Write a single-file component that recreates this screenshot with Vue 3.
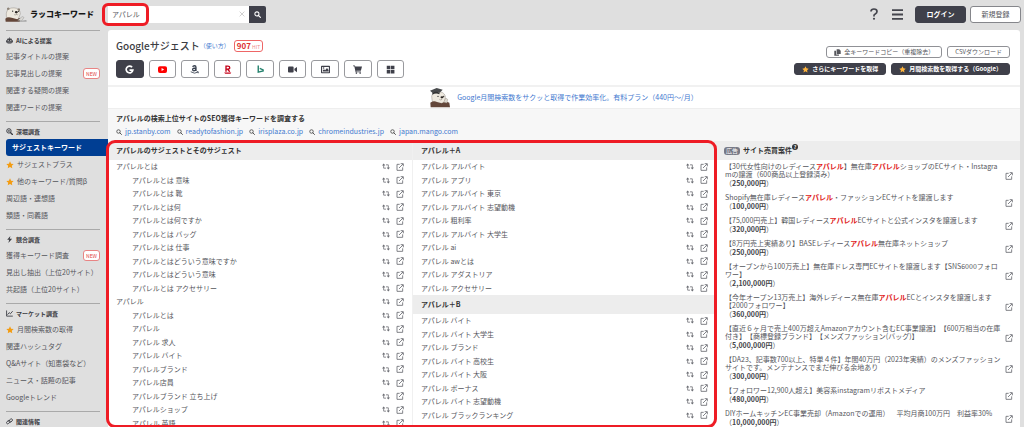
<script setup>
import { ref } from 'vue'

const query = ref('アパレル')

const sections = [
  {
    title: 'AIによる提案',
    icon: 'robot',
    items: [
      { label: '記事タイトルの提案' },
      { label: '記事見出しの提案', isNew: true },
      { label: '関連する疑問の提案' },
      { label: '関連ワードの提案' },
    ],
  },
  {
    title: '深堀調査',
    icon: 'zoom',
    items: [
      { label: 'サジェストキーワード', active: true },
      { label: 'サジェストプラス', star: true },
      { label: '他のキーワード/質問β', star: true },
      { label: '周辺語・連想語' },
      { label: '類語・同義語' },
    ],
  },
  {
    title: '競合調査',
    icon: 'bolt',
    items: [
      { label: '獲得キーワード調査', isNew: true },
      { label: '見出し抽出（上位20サイト）' },
      { label: '共起語（上位20サイト）' },
    ],
  },
  {
    title: 'マーケット調査',
    icon: 'chart',
    items: [
      { label: '月間検索数の取得', star: true },
      { label: '関連ハッシュタグ' },
      { label: 'Q&Aサイト（知恵袋など）' },
      { label: 'ニュース・話題の記事' },
      { label: 'Googleトレンド' },
    ],
  },
  { title: '関連情報', icon: 'link', items: [] },
]

const engines = ['google', 'youtube', 'amazon', 'rakuten', 'bing', 'video', 'image', 'cart', 'windows']
const engineNames = ['Google', 'YouTube', 'Amazon', '楽天', 'Bing', '動画', '画像', 'ショッピング', 'Microsoft']

const domains = ['jp.stanby.com', 'readytofashion.jp', 'irisplaza.co.jp', 'chromeindustries.jp', 'japan.mango.com']

const columns = [
  [
    {
      title: 'アパレルのサジェストとそのサジェスト',
      rows: [
        ['アパレルとは', 0],
        ['アパレルとは 意味', 1],
        ['アパレルとは 靴', 1],
        ['アパレルとは何', 1],
        ['アパレルとは何ですか', 1],
        ['アパレルとは バッグ', 1],
        ['アパレルとは 仕事', 1],
        ['アパレルとはどういう意味ですか', 1],
        ['アパレルとはどういう意味', 1],
        ['アパレルとは アクセサリー', 1],
        ['アパレル', 0],
        ['アパレルとは', 1],
        ['アパレル', 1],
        ['アパレル 求人', 1],
        ['アパレル バイト', 1],
        ['アパレルブランド', 1],
        ['アパレル店員', 1],
        ['アパレルブランド 立ち上げ', 1],
        ['アパレルショップ', 1],
        ['アパレル 英語', 1],
      ],
    },
  ],
  [
    {
      title: 'アパレル＋A',
      rows: [
        ['アパレル アルバイト', 0],
        ['アパレル アプリ', 0],
        ['アパレル アルバイト 東京', 0],
        ['アパレル アルバイト 志望動機', 0],
        ['アパレル 粗利率', 0],
        ['アパレル アルバイト 大学生', 0],
        ['アパレル ai', 0],
        ['アパレル awとは', 0],
        ['アパレル アダストリア', 0],
        ['アパレル アクセサリー', 0],
      ],
    },
    {
      title: 'アパレル＋B',
      rows: [
        ['アパレル バイト', 0],
        ['アパレル バイト 大学生', 0],
        ['アパレル ブランド', 0],
        ['アパレル バイト 高校生', 0],
        ['アパレル バイト 大阪', 0],
        ['アパレル ボーナス', 0],
        ['アパレル バイト 志望動機', 0],
        ['アパレル ブラックランキング', 0],
      ],
    },
  ],
]

const listings = [
  ['【30代女性向けのレディース*アパレル*】無在庫*アパレル*ショップのECサイト・Instagramの譲渡（600商品以上登録済み）', '250,000円'],
  ['Shopify無在庫レディース*アパレル*・ファッションECサイトを譲渡します', '100,000円'],
  ['【75,000円売上】韓国レディース*アパレル*ECサイトと公式インスタを譲渡します', '320,000円'],
  ['【8万円売上実績あり】BASEレディース*アパレル*無在庫ネットショップ', '250,000円'],
  ['【オープンから100万売上】無在庫ドレス専門ECサイトを譲渡します【SNS6000フォロワー】', '2,100,000円'],
  ['【今年オープン13万売上】海外レディース無在庫*アパレル*ECとインスタを譲渡します【2000フォロワー】', '360,000円'],
  ['【直近６ヶ月で売上400万超えAmazonアカウント含むEC事業譲渡】【600万相当の在庫付き】【商標登録ブランド】【メンズファッション(バッグ)】', '5,000,000円'],
  ['【DA23、記事数700以上、特単４件】年間40万円（2023年実績）のメンズファッションサイトです。メンテナンスでまだ伸びる余地あり', '300,000円'],
  ['【フォロワー12,900人超え】美容系instagramリポストメディア', '480,000円'],
  ['DIYホームキッチンEC事業売却（Amazonでの運用）　平均月商100万円　利益率30%', '10,000,000円'],
].map(([title, price]) => ({ parts: title.split('*'), price }))
</script>

<template>
  <div class="page">
    <svg class="defs" aria-hidden="true">
      <symbol id="i-star" viewBox="0 0 24 24"><path fill="currentColor" d="M12 1l3.4 7 7.6 1-5.600 5.300 1.400 7.700L12 18.300 5.200 22l1.400-7.700L1 9l7.600-1z" /></symbol>
      <symbol id="i-search" viewBox="0 0 24 24"><circle cx="10" cy="10" r="7" fill="none" stroke="currentColor" stroke-width="3.600" /><path d="M15 15l7 7" stroke="currentColor" stroke-width="4" stroke-linecap="round" /></symbol>
      <symbol id="i-zoom" viewBox="0 0 24 24"><circle cx="10" cy="10" r="7.500" fill="none" stroke="currentColor" stroke-width="3.400" /><path d="M16 16l6 6" stroke="currentColor" stroke-width="4.500" stroke-linecap="round" /><path d="M10 6.500v7M6.500 10h7" stroke="currentColor" stroke-width="2.400" /></symbol>
      <symbol id="i-robot" viewBox="0 0 24 24"><path fill="currentColor" fill-rule="evenodd" d="M11 1h2v4h4a3 3 0 013 3v11a3 3 0 01-3 3H7a3 3 0 01-3-3V8a3 3 0 013-3h4zM0 11h3v8H1l-1-1zM21 11h3v7l-1 1h-2zM8 9a2 2 0 100 4 2 2 0 000-4zM16 9a2 2 0 100 4 2 2 0 000-4zM7 16v2h10v-2z" /></symbol>
      <symbol id="i-bolt" viewBox="0 0 24 24"><path fill="currentColor" d="M15 0L4 13h7L8 24l13-15h-8z" /></symbol>
      <symbol id="i-chart" viewBox="0 0 24 24"><path fill="none" stroke="currentColor" stroke-width="3" stroke-linecap="round" d="M2 3v18h20M6 15l5-6 4 4 7-8" /></symbol>
      <symbol id="i-link" viewBox="0 0 24 24"><g fill="none" stroke="currentColor" stroke-width="3"><rect x="1" y="10" width="14" height="8" rx="4" transform="rotate(-40 8 14)" /><rect x="9" y="5" width="14" height="8" rx="4" transform="rotate(-40 16 9)" /></g></symbol>
      <symbol id="i-retweet" viewBox="0 0 24 20"><path fill="none" stroke="currentColor" stroke-width="2.400" d="M5 3v12h7M12 5h7v12" /><path fill="currentColor" d="M0 7l5-6 5 6zM14 13h10l-5 6z" /></symbol>
      <symbol id="i-out" viewBox="0 0 24 24"><path fill="none" stroke="currentColor" stroke-width="2.600" d="M11 4H3v18h17v-9M9 15L21 3M14 2h8v8" /></symbol>
      <symbol id="i-copy" viewBox="0 0 24 24"><path fill="currentColor" d="M9 1h9l5 5v11H9zM1 6h6v13h10v4H1z" /></symbol>
      <symbol id="i-google" viewBox="0 0 24 24"><path fill="none" stroke="currentColor" stroke-width="4.400" d="M19 6a9 9 0 10 2 7.500h-9" /></symbol>
      <symbol id="i-youtube" viewBox="0 0 24 24"><rect y="3" width="24" height="18" rx="5" fill="#f00" /><path fill="#fff" d="M9.500 8v8l7-4z" /></symbol>
      <symbol id="i-amazon" viewBox="0 0 24 24"><path fill="none" stroke="#38404f" stroke-width="3.400" d="M7 5q1-3 5-3t4 4v10M16 8q-9 0-9 4.500 0 3 3.500 3T16 11" /><path fill="none" stroke="#38404f" stroke-width="2.200" d="M2 18q10 7 19 1M18 18h4v4" /></symbol>
      <symbol id="i-rakuten" viewBox="0 0 24 24"><path fill="none" stroke="#c40018" stroke-width="3.600" d="M8 18V3h5q5 0 5 4t-5 4H8M12 11l6 7" /><path fill="#c40018" d="M3 20h19l-2 3H6z" /></symbol>
      <symbol id="i-bing" viewBox="0 0 24 24"><path fill="none" stroke="#26836f" stroke-width="3.800" d="M6 1v18l13-3v-3l-9-4" /></symbol>
      <symbol id="i-video" viewBox="0 0 24 24"><rect y="4" width="15" height="16" rx="2.500" fill="currentColor" /><path fill="currentColor" d="M17 10l7-5v14l-7-5z" /></symbol>
      <symbol id="i-image" viewBox="0 0 24 24"><path fill="currentColor" fill-rule="evenodd" d="M2 2h20a2 2 0 012 2v16a2 2 0 01-2 2H2a2 2 0 01-2-2V4a2 2 0 012-2zM3 5v14h18V5zM5 17v-3l3-3 3 3 5-6 4 5v4z" /><circle cx="7" cy="8" r="2" fill="currentColor" /></symbol>
      <symbol id="i-cart" viewBox="0 0 24 24"><path fill="currentColor" d="M0 1h5l1 3h18l-3 11H9v2h12v2H7L3.500 3H0z" /><circle cx="9" cy="21.500" r="2.200" fill="currentColor" /><circle cx="19" cy="21.500" r="2.200" fill="currentColor" /></symbol>
      <symbol id="i-windows" viewBox="0 0 24 24"><path fill="currentColor" d="M2 2h9.500v9.500H2zM13 2h9.500v9.500H13zM2 13h9.500v9.500H2zM13 13h9.500v9.500H13z" /></symbol>
      <symbol id="i-otter" viewBox="0 0 66 48">
        <path d="M4 20Q2 33 9 39h30l7-17Q45 5 27 4 7 3 4 20z" fill="#eee9df" stroke="#68615a" stroke-width="1" />
        <path d="M7 11Q4 4 9 3t5 5zM37 8q6-5 8 0t-4 6z" fill="#8c8277" />
        <circle cx="23" cy="14" r="1.800" fill="#222" /><circle cx="41" cy="15" r="1.800" fill="#222" />
        <ellipse cx="34" cy="17" rx="4.500" ry="3.200" fill="#2b2522" />
        <path d="M34 20v4q-4 3-7 0M34 24q4 2 6-1" fill="none" stroke="#4d443e" />
        <path d="M1 37Q8 30 20 34l17 4q6-5 10-3l-3 11H2z" fill="#64473a" />
        <path d="M38 41l14-11 5 3-7 10z" fill="#d9d8d4" stroke="#777" />
        <path d="M34 45l30-4 1 4z" fill="#8c8c8c" />
      </symbol>
    </svg>

    <header class="top">
      <a class="logo" href="#">
        <svg class="logo-mark" aria-hidden="true"><use href="#i-otter" /></svg>
        <span>ラッコキーワード</span>
      </a>
      <form class="search" @submit.prevent>
        <input v-model="query" type="text" aria-label="キーワード" />
        <button class="clear" type="button" aria-label="クリア" @click="query = ''">
          <svg viewBox="0 0 10 10"><path d="M1 1l8 8M9 1L1 9" stroke="#ccc" stroke-width="1.500" /></svg>
        </button>
        <button class="go" type="submit" aria-label="検索"><svg><use href="#i-search" /></svg></button>
        <span class="mark mark-query"></span>
      </form>
      <div class="account">
        <button class="plain" type="button" aria-label="ヘルプ">
          <svg viewBox="0 0 16 24"><path d="M2 7q0-5 6-5t6 5q0 3-3.500 5T8 16v1" fill="none" stroke="currentColor" stroke-width="3.400" /><circle cx="8" cy="21.500" r="2.200" fill="currentColor" /></svg>
        </button>
        <button class="plain menu" type="button" aria-label="メニュー">
          <svg viewBox="0 0 20 20"><path d="M0 2h20M0 10h20M0 18h20" stroke="currentColor" stroke-width="3.200" /></svg>
        </button>
        <button class="btn dark" type="button">ログイン</button>
        <button class="btn" type="button">新規登録</button>
      </div>
    </header>

    <div class="body">
      <nav class="side">
        <section v-for="s in sections" :key="s.title">
          <h2><svg><use :href="'#i-' + s.icon" /></svg>{{ s.title }}</h2>
          <ul>
            <li v-for="item in s.items" :key="item.label">
              <a href="#" :class="{ active: item.active }">
                <svg v-if="item.star" class="star"><use href="#i-star" /></svg>
                <span>{{ item.label }}</span>
                <em v-if="item.isNew">NEW</em>
              </a>
            </li>
          </ul>
        </section>
      </nav>

      <main>
        <div class="summary">
          <div>
            <div class="title">
              <h1>Googleサジェスト</h1>
              <a href="#">（使い方）</a>
              <span class="hit"><b>907</b> HIT</span>
            </div>
            <div class="engines">
              <button v-for="(e, i) in engines" :key="e" type="button" :class="{ on: i === 0 }" :aria-label="engineNames[i]">
                <svg><use :href="'#i-' + e" /></svg>
              </button>
            </div>
          </div>
          <div class="actions">
            <div>
              <button class="small" type="button"><svg><use href="#i-copy" /></svg>全キーワードコピー（重複除去）</button>
              <button class="small" type="button">CSVダウンロード</button>
            </div>
            <div>
              <button class="small dark" type="button"><svg class="star"><use href="#i-star" /></svg>さらにキーワードを取得</button>
              <button class="small dark" type="button"><svg class="star"><use href="#i-star" /></svg>月間検索数を取得する（Google）</button>
            </div>
          </div>
        </div>

        <a class="promo" href="#">
          <svg viewBox="0 0 60 60" aria-hidden="true">
            <path d="M5 24Q4 39 12 46h29q6-8 5-22Q41 11 26 11 8 11 5 24z" fill="#eee9df" stroke="#68615a" />
            <path d="M0 8L20 0l18 5-9 9q-11-4-21 1z" fill="#484a4c" /><path d="M7 14q10-6 22 0l-1 5q-10-5-21 1z" fill="#333" />
            <circle cx="24" cy="25" r="2" fill="#222" /><circle cx="41" cy="25" r="2" fill="#222" />
            <ellipse cx="36" cy="28" rx="4.500" ry="3" fill="#2b2522" />
            <path d="M35 31v4q-4 2-7-1" fill="none" stroke="#4d443e" />
            <path d="M1 44q10-7 20-2l14 4q10-9 23-2l2 14H2z" fill="#64473a" />
            <path d="M41 43l6-13 6 4-2 11z" fill="#ddd9d0" stroke="#86776b" />
          </svg>
          Google月間検索数をサクッと取得で作業効率化。有料プラン（440円〜/月）
        </a>

        <section class="seo">
          <h3>アパレルの検索上位サイトのSEO獲得キーワードを調査する</h3>
          <div class="domains">
            <a v-for="d in domains" :key="d" href="#"><svg><use href="#i-search" /></svg>{{ d }}</a>
          </div>
        </section>

        <div class="results">
          <div v-for="(col, c) in columns" :key="c" class="col">
            <template v-for="g in col" :key="g.title">
              <h3 class="band">{{ g.title }}</h3>
              <ul class="words">
                <li v-for="(r, i) in g.rows" :key="i">
                  <span :class="{ child: r[1] }">{{ r[0] }}</span>
                  <button type="button" aria-label="再検索"><svg><use href="#i-retweet" /></svg></button>
                  <a href="#" aria-label="開く"><svg><use href="#i-out" /></svg></a>
                </li>
              </ul>
            </template>
          </div>
          <div class="col">
            <h3 class="band"><span class="ad">広告</span>サイト売買案件<sup>?</sup></h3>
            <ul class="sales">
              <li v-for="(l, i) in listings" :key="i">
                <div>
                  <p><template v-for="(p, k) in l.parts" :key="k"><b v-if="k % 2">{{ p }}</b><template v-else>{{ p }}</template></template></p>
                  <p class="price">（<strong>{{ l.price }}</strong>）</p>
                </div>
                <a href="#" aria-label="開く"><svg><use href="#i-out" /></svg></a>
              </li>
            </ul>
          </div>
          <span class="mark mark-results"></span>
        </div>
      </main>
    </div>
  </div>
</template>

<style>
body {
  background: #dfdfdf;
}
</style>

<style scoped>
.page {
  --dark: #3f404a;
  --red: #ee1c25;
  --blue: #4379cf;
  display: flex;
  flex-direction: column;
  height: 100vh;
  overflow: hidden;
  background: #dfdfdf;
  color: #55565c;
  font-family: "Noto Sans CJK JP", sans-serif;
  font-size: 7px;
  line-height: 1;
  text-spacing-trim: space-all;
}
.page *,
.page *::before {
  box-sizing: border-box;
}
.defs {
  position: absolute;
  width: 0;
  height: 0;
}
svg {
  display: block;
  flex: none;
  width: 8px;
  height: 8px;
}
h1,
h2,
h3,
p,
ul {
  margin: 0;
  padding: 0;
  list-style: none;
}
a {
  color: inherit;
  text-decoration: none;
}
button,
input {
  margin: 0;
  padding: 0;
  border: 0;
  background: none;
  color: inherit;
  font: inherit;
}
.star {
  color: #f39c12;
}

/* header */
.top {
  display: flex;
  flex: none;
  align-items: center;
  height: 30px;
  padding: 0 3px 2px 5px;
}
.logo {
  display: flex;
  flex: none;
  align-items: center;
  gap: 3px;
  width: 103px;
  color: #161616;
  font-size: 8px;
  font-weight: 900;
}
.logo-mark {
  width: 22px;
  height: 17px;
}
.search {
  position: relative;
  display: flex;
  width: 158px;
  height: 17px;
}
.search input {
  flex: 1;
  min-width: 0;
  padding-left: 4px;
  background: #fff;
  outline: 0;
}
.clear {
  display: grid;
  place-items: center;
  width: 14px;
  background: #fff;
}
.clear svg {
  width: 6px;
  height: 6px;
}
.go {
  display: grid;
  place-items: center;
  width: 17px;
  border-radius: 0 2px 2px 0;
  background: var(--dark);
  color: #fff;
}
.go svg {
  width: 7px;
  height: 7px;
}
.mark {
  position: absolute;
  border: 3px solid var(--red);
  pointer-events: none;
}
.mark-query {
  inset: -3px auto -3px -6px;
  width: 47px;
  border-radius: 6px;
}
.account {
  display: flex;
  align-items: center;
  gap: 4px;
  margin-left: auto;
}
.plain {
  color: #44454d;
}
.plain svg {
  width: 8px;
  height: 12px;
}
.menu {
  margin: 0 8px 0 10px;
}
.menu svg {
  width: 11px;
  height: 11px;
}
.btn {
  width: 51px;
  height: 17px;
  border: 1px solid #85868b;
  border-radius: 3px;
  background: #fff;
}
.dark.dark {
  border-color: var(--dark);
  background: var(--dark);
  color: #fff;
  font-weight: 700;
}

/* sidebar */
.body {
  display: flex;
  flex: 1;
  min-height: 0;
}
.side {
  flex: none;
  width: 108px;
  padding-left: 6px;
}
.side section {
  padding-bottom: 5px;
}
.side section::before {
  content: "";
  display: block;
  height: 1px;
  margin-right: 8px;
  background: #a9a9a9;
}
.side h2 {
  display: flex;
  align-items: center;
  gap: 3px;
  height: 17px;
  padding-top: 2px;
  color: #3c3d43;
  font-size: 6px;
  font-weight: 700;
}
.side h2 svg {
  width: 7px;
  height: 7px;
}
.side li a {
  display: flex;
  align-items: center;
  gap: 3px;
  height: 17px;
  padding-right: 8px;
  white-space: nowrap;
}
.side li a.active {
  padding-left: 6px;
  border-radius: 3px 0 0 3px;
  background: #003e93;
  color: #fff;
  font-weight: 700;
}
.side em {
  margin-left: auto;
  padding: 2px;
  border: 1px solid #e88484;
  border-radius: 3px;
  background: #fff;
  color: #e04545;
  font-size: 5px;
  font-style: normal;
}

/* main panel */
main {
  display: flex;
  flex: 1;
  flex-direction: column;
  min-width: 0;
  margin-right: 4px;
  border-radius: 3px 3px 0 0;
  background: #fff;
}
.summary {
  display: flex;
  flex: none;
  justify-content: space-between;
  padding: 8px 10px 7px 8px;
  border-bottom: 2px solid #f1f1f1;
}
.title {
  display: flex;
  align-items: center;
  height: 15px;
  color: #3c3d43;
}
.title h1 {
  font-size: 10px;
  font-weight: 500;
}
.title a {
  color: var(--blue);
  font-size: 6px;
}
.hit {
  margin-left: 4px;
  padding: 1px 2px;
  border: 1px solid #e66;
  border-radius: 3px;
  color: #e88;
  font-size: 5px;
}
.hit b {
  color: #d33;
  font-size: 8px;
}
.engines {
  display: flex;
  gap: 5px;
  width: 288px;
  margin-top: 7px;
}
.engines button {
  display: grid;
  flex: 1;
  place-items: center;
  height: 18px;
  border: 1px solid #999a9e;
  border-radius: 3px;
  color: var(--dark);
}
.engines button.on {
  border-color: var(--dark);
  background: var(--dark);
  color: #fff;
}
.engines svg {
  width: 9px;
  height: 9px;
}
.actions {
  display: grid;
  align-content: start;
  gap: 5px;
  padding-top: 8px;
}
.actions > div {
  display: flex;
  justify-content: flex-end;
  gap: 5px;
}
.small {
  display: flex;
  align-items: center;
  gap: 3px;
  height: 12px;
  padding: 0 7px;
  border: 1px solid #909196;
  border-radius: 3px;
  font-size: 6px;
  white-space: nowrap;
}
.small svg {
  width: 7px;
  height: 7px;
}
.small .star {
  color: #ffb43c;
}
.promo {
  display: flex;
  flex: none;
  align-items: center;
  justify-content: center;
  gap: 7px;
  height: 22px;
  border-bottom: 1px solid #eee;
  color: var(--blue);
}
.promo svg {
  width: 20px;
  height: 20px;
}
.seo {
  flex: none;
  padding: 5px 8px;
  background: #f7f7f7;
  color: #333;
}
.seo h3 {
  font-size: 7px;
  font-weight: 700;
  line-height: 8px;
}
.domains {
  display: flex;
  gap: 6px;
  margin-top: 5px;
  line-height: 9px;
}
.domains a {
  display: flex;
  align-items: center;
  gap: 3px;
  color: var(--blue);
}
.domains svg {
  width: 6px;
  height: 6px;
  color: #555;
}

/* result columns */
.results {
  position: relative;
  display: grid;
  flex: 1;
  grid-template-columns: repeat(3, minmax(0, 1fr));
  min-height: 0;
}
.col + .col {
  border-left: 1px solid #f0f0f0;
}
.col:nth-child(3) {
  border-left: 0;
}
.band {
  display: flex;
  align-items: center;
  height: 19px;
  padding: 0 8px;
  background: #ededed;
  color: #333;
  font-size: 7px;
  font-weight: 700;
}
.words li {
  display: flex;
  align-items: center;
  gap: 6px;
  height: 13px;
  padding: 0 8px;
}
.words li:nth-child(even) {
  height: 14px;
}
.words span {
  margin-right: auto;
}
.words .child {
  padding-left: 16px;
}
.words svg,
.sales svg {
  color: #6e7076;
}
.words button svg {
  height: 7px;
}
.ad {
  margin-right: 3px;
  padding: 1px 2px;
  border-radius: 3px;
  background: #777986;
  color: #fff;
  font-size: 6px;
  font-weight: 400;
}
.band sup {
  display: grid;
  place-items: center;
  width: 6px;
  height: 6px;
  margin-bottom: 8px;
  border-radius: 50%;
  background: #333;
  color: #fff;
  font-size: 5px;
}
.sales {
  padding: 2px 7px 0 9px;
}
.sales li {
  display: flex;
  align-items: center;
  justify-content: space-between;
  padding-bottom: 4px;
  line-height: 8px;
  word-break: break-all;
}
.sales li > div {
  flex: 1;
  margin-right: 4px;
}
.sales b {
  color: #e02020;
}
.sales .price {
  padding: 1px 0 2px;
}
.price strong {
  color: #44454b;
}
.mark-results {
  top: -1px;
  bottom: -1px;
  left: -2px;
  width: calc(66.66% + 3px);
  border-radius: 9px;
}
</style>
